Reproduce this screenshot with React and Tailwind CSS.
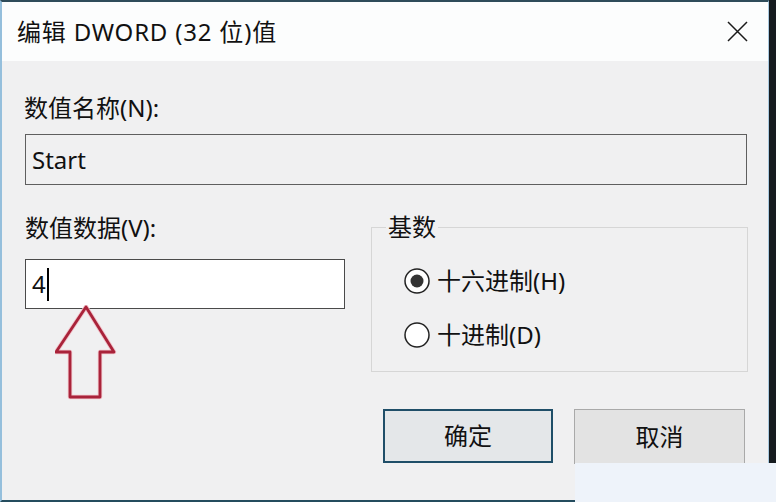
import React from 'react';

const font = { fontFamily: '"Noto Sans", "Noto Sans CJK SC", sans-serif' };

function Radio({ checked, label }) {
  return (
    <div className="flex items-center h-[28px]">
      <svg width="26" height="26" viewBox="0 0 26 26" className="shrink-0">
        <circle cx="13" cy="13" r="12" fill="#ffffff" stroke="#222222" strokeWidth="1.5" />
        {checked && <circle cx="13" cy="13" r="6.5" fill="#333333" />}
      </svg>
      <span className="ml-[7px] text-[24px] leading-[28px] text-[#111]">{label}</span>
    </div>
  );
}

function Arrow() {
  return (
    <svg width="62" height="95" viewBox="0 0 62 95" className="ml-[30px] -mt-[4px] block">
      <polygon
        points="31,2 1,47 15,47 15,92 45,92 45,47 59,47"
        fill="none"
        stroke="#f1c2ca"
        strokeWidth="4.5"
        strokeLinejoin="round"
      />
      <polygon
        points="31,2 1,47 15,47 15,92 45,92 45,47 59,47"
        fill="none"
        stroke="#a9233a"
        strokeWidth="2.8"
        strokeLinejoin="round"
      />
    </svg>
  );
}

export default function App() {
  return (
    <div className="relative w-[776px] h-[502px] overflow-hidden bg-[#eef3fa] flex" style={font}>
      <div className="w-[769px] h-[502px] shrink-0 flex flex-col border-l-2 border-r border-t-2 border-b-2 border-l-[#95bfdc] border-r-[#a9c9df] border-t-[#2f4c5a] border-b-[#244c5e]">
        {/* title bar */}
        <div className="h-[59px] shrink-0 bg-[#fcfdfd] flex items-center justify-between pl-[15px] pr-[20px]">
          <span className="text-[24px] leading-[28px] tracking-[0.8px] text-[#111]">编辑 DWORD (32 位)值</span>
          <svg width="21" height="21" viewBox="0 0 21 21">
            <path d="M1 1 L20 20 M20 1 L1 20" stroke="#1a1a1a" strokeWidth="1.5" />
          </svg>
        </div>

        {/* body */}
        <div className="flex-1 bg-[#f0f0f1] flex flex-col">
          <div className="mt-[33px] ml-[22px] text-[24px] leading-[28px] text-[#111]">数值名称(N):</div>
          <div className="mt-[12px] ml-[23px] w-[722px] h-[51px] border border-[#5f5f5f] bg-[#f0f0f1] flex items-center pl-[6px] text-[24px] text-[#111]">
            Start
          </div>

          <div className="mt-[28px] flex">
            <div className="ml-[23px] w-[320px] flex flex-col">
              <div className="mt-[1px] text-[24px] leading-[28px] text-[#111]">数值数据(V):</div>
              <div className="mt-[17px] h-[50px] border border-[#4a4a4a] bg-white flex items-center pl-[6px] text-[24px] text-[#111]">
                <span>4</span>
                <span className="ml-[1px] w-[2px] h-[33px] bg-black" />
              </div>
              <Arrow />
            </div>

            <fieldset className="ml-[26px] w-[377px] self-start border border-[#d6d6d6] pl-[32px] pb-[22px]">
              <legend className="-ml-[18px] px-[2px] text-[24px] leading-[28px] text-[#111]">基数</legend>
              <div className="mt-[26px]">
                <Radio checked label="十六进制(H)" />
              </div>
              <div className="mt-[26px]">
                <Radio label="十进制(D)" />
              </div>
            </fieldset>
          </div>

          <div className="mt-[9px] flex justify-end gap-[21px] pr-[23px]">
            <button className="w-[170px] h-[54px] border-2 border-[#1f4e68] bg-[#e4e7e9] text-[24px] text-[#111] flex items-center justify-center">
              确定
            </button>
            <button className="w-[171px] h-[55px] border border-[#a9a9a9] bg-[#e3e3e3] text-[24px] text-[#111] flex items-center justify-center">
              取消
            </button>
          </div>
        </div>
      </div>
      <div className="w-[7px] h-full bg-[#161b1f]" />

      {/* watermark patch over the lower right corner */}
      <div className="absolute left-[575px] top-[463px] right-0 bottom-0 bg-[#eef3fa]" />
    </div>
  );
}
